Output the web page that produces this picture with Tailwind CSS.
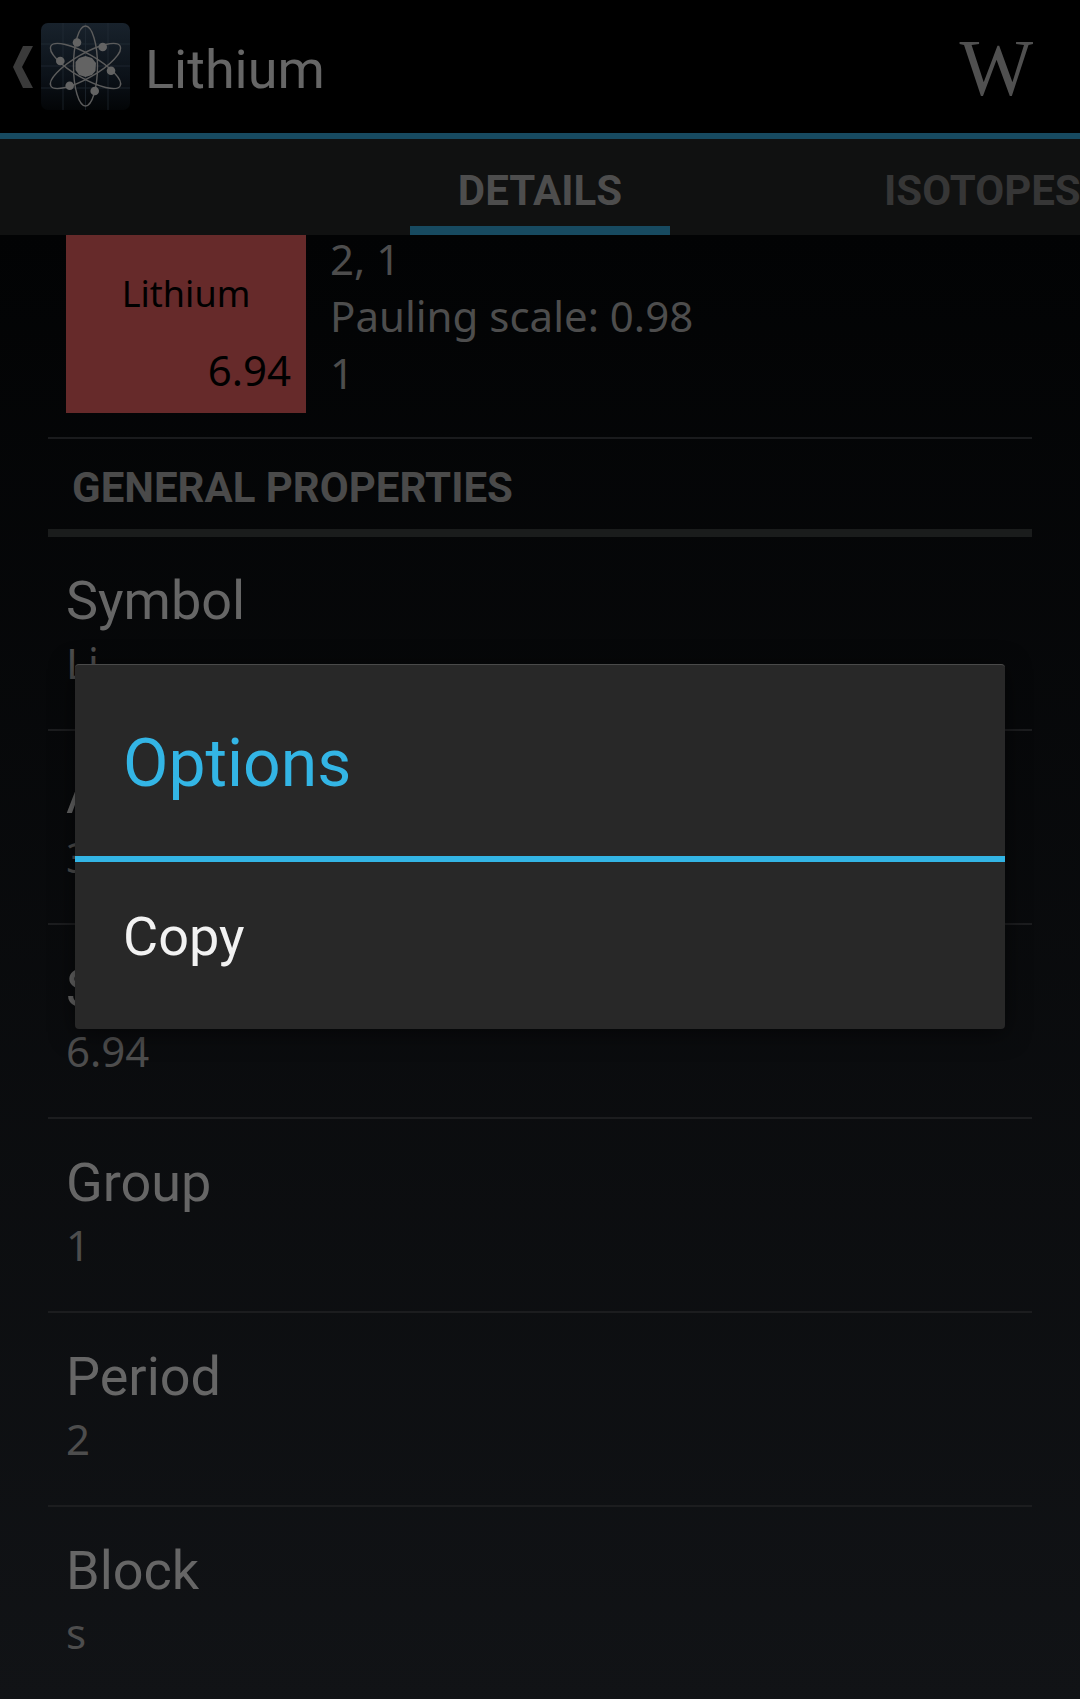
<!DOCTYPE html>
<html>
<head>
<meta charset="utf-8">
<script src="https://cdn.jsdelivr.net/npm/@tailwindcss/browser@4"></script>
</head>
<body class="bg-black">
<div class="relative w-[1080px] h-[1699px] overflow-hidden flex flex-col bg-black font-['Roboto',sans-serif]">
  <header class="h-[133px] shrink-0 flex items-start bg-black">
    <svg class="ml-[13px] mt-[46px] w-[20px] h-[42px] shrink-0" viewBox="0 0 20 42"><polygon points="10,0 20,0 9,21 20,42 10,42 0,21" fill="#3a3a3a"/></svg>
    <svg class="ml-[8px] mt-[23px] w-[89px] h-[87px] shrink-0" viewBox="0 0 89 87">
      <defs><linearGradient id="g" x1="0" y1="0" x2="0" y2="1"><stop offset="0" stop-color="#18222c"/><stop offset="0.6" stop-color="#0c1219"/><stop offset="1" stop-color="#030507"/></linearGradient></defs>
      <rect width="89" height="87" rx="7" fill="url(#g)"/>
      <g stroke="#26303a" stroke-width="1" opacity="0.6"><path d="M22 0V87M44.500 0V87M67 0V87M0 21H89M0 43H89M0 65H89"/></g>
      <g fill="none" stroke="#5c5c5c" stroke-width="1.4">
        <ellipse cx="44.500" cy="43" rx="12" ry="40"/>
        <ellipse cx="44.500" cy="43" rx="12" ry="40" transform="rotate(60 44.500 43)"/>
        <ellipse cx="44.500" cy="43" rx="12" ry="40" transform="rotate(-60 44.500 43)"/>
      </g>
      <g fill="#636363">
        <polygon points="44.500,33 51,35 55,40 54.500,48 51,52 44.500,54 38,52 34.500,47 34.500,39 38,35"/>
        <circle cx="36" cy="19.500" r="4.300"/><circle cx="61.700" cy="24" r="4.300"/><circle cx="19.300" cy="38" r="4.300"/>
        <circle cx="70" cy="47.700" r="4.300"/><circle cx="28.700" cy="62.700" r="4.300"/><circle cx="53.700" cy="68" r="4.300"/>
      </g>
    </svg>
    <h1 class="ml-[15px] text-[54px] leading-[140px] font-normal text-[#666666]">Lithium</h1>
    <span class="ml-auto mr-[47px] inline-block origin-bottom scale-y-[1.03] font-['Liberation_Serif',serif] text-[78px] leading-[139px] text-[#505050]">W</span>
  </header>
  <div class="h-[6px] shrink-0 bg-[#174a60]"></div>
  <nav class="h-[96px] shrink-0 bg-[#101111] flex pl-[410px] font-bold text-[42px] whitespace-nowrap overflow-hidden">
    <div class="w-[260px] shrink-0 flex flex-col">
      <span class="h-[87px] leading-[103px] text-center text-[#4d4d4d]">DETAILS</span>
      <span class="h-[9px] bg-[#174a60]"></span>
    </div>
    <span class="ml-[214px] leading-[103px] h-[87px] text-[#363636]">ISOTOPES</span>
  </nav>
  <main class="flex-1 overflow-hidden bg-[linear-gradient(to_bottom,#020304,#111316)]">
    <div class="-mt-[62px] mx-[48px] font-['Noto_Sans',sans-serif]">
      <section class="h-[264px] flex pl-[18px]">
        <div class="w-[240px] h-[240px] shrink-0 bg-[#662a2a] text-black flex flex-col">
          <span class="pt-[97px] text-[36px] leading-[48px] text-center block">Lithium</span>
          <span class="mt-[28px] pr-[15px] text-[42px] leading-[48px] text-right block">6.94</span>
        </div>
        <div class="ml-[24px] pt-[57px] text-[42px] leading-[57px] text-[#4d4d4d]">
          <div>2, 1</div>
          <div>Pauling scale: 0.98</div>
          <div>1</div>
        </div>
      </section>
      <div class="h-[100px] border-t-2 border-b-[8px] border-t-[#1a1b1d] border-b-[#1a1c1c] pl-[24px] font-['Roboto',sans-serif] font-bold text-[42px] leading-[97px] text-[#4a4a4a]">GENERAL PROPERTIES</div>
      <div class="h-[192px] pl-[18px] pt-[34px]">
        <div class="font-['Roboto',sans-serif] text-[54px] leading-[60px] text-[#666666]">Symbol</div>
        <div class="text-[42px] leading-[64px] text-[#4d4d4d]">Li</div>
      </div>
      <div class="h-[194px] border-t-2 border-[#1c1d1f] pl-[18px] pt-[34px]">
        <div class="font-['Roboto',sans-serif] text-[54px] leading-[60px] text-[#666666]">Atomic number</div>
        <div class="text-[42px] leading-[64px] text-[#4d4d4d]">3</div>
      </div>
      <div class="h-[194px] border-t-2 border-[#1c1d1f] pl-[18px] pt-[34px]">
        <div class="font-['Roboto',sans-serif] text-[54px] leading-[60px] text-[#666666]">Standard atomic weight</div>
        <div class="text-[42px] leading-[64px] text-[#4d4d4d]">6.94</div>
      </div>
      <div class="h-[194px] border-t-2 border-[#1c1d1f] pl-[18px] pt-[34px]">
        <div class="font-['Roboto',sans-serif] text-[54px] leading-[60px] text-[#666666]">Group</div>
        <div class="text-[42px] leading-[64px] text-[#4d4d4d]">1</div>
      </div>
      <div class="h-[194px] border-t-2 border-[#1c1d1f] pl-[18px] pt-[34px]">
        <div class="font-['Roboto',sans-serif] text-[54px] leading-[60px] text-[#666666]">Period</div>
        <div class="text-[42px] leading-[64px] text-[#4d4d4d]">2</div>
      </div>
      <div class="h-[194px] border-t-2 border-[#1c1d1f] pl-[18px] pt-[34px]">
        <div class="font-['Roboto',sans-serif] text-[54px] leading-[60px] text-[#666666]">Block</div>
        <div class="text-[42px] leading-[64px] text-[#4d4d4d]">s</div>
      </div>
    </div>
  </main>
  <div class="absolute left-[75px] top-[664px] w-[930px] h-[365px] bg-[#282828] rounded-[4px] border-t border-[#4a4a4a] shadow-[0_4px_24px_rgba(0,0,0,0.55)] flex flex-col">
    <div class="h-[191px] pl-[48px] pt-[10px] text-[66px] leading-[177px] text-[#33b5e5]">Options</div>
    <div class="h-[6px] bg-[#33b5e5]"></div>
    <div class="pl-[48px] text-[54px] leading-[149px] text-[#f2f2f2]">Copy</div>
  </div>
</div>
</body>
</html>
